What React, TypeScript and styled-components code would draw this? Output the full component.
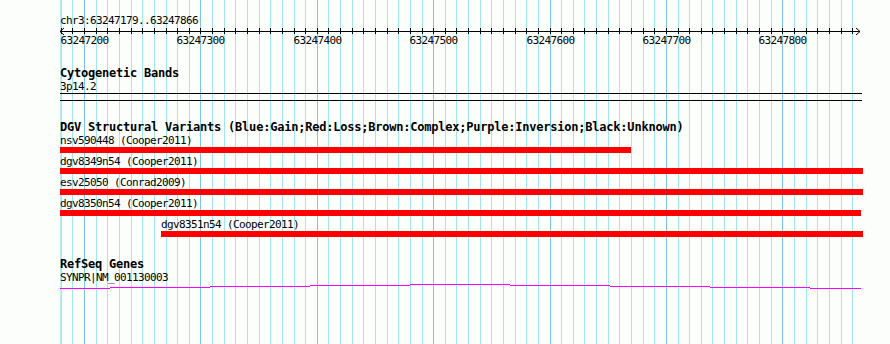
import React from "react";
import styled, { createGlobalStyle } from "styled-components";

const START = 63247179;
const END = 63247866;
const ORIGIN = 59.6;
const SCALE = 1.1638;
const toX = (bp: number) => Math.round(ORIGIN + (bp - START) * SCALE);

const ticks: number[] = [];
for (let bp = 63247180; bp <= 63247860; bp += 10) ticks.push(bp);

const variants = [
  { name: "nsv590448", study: "Cooper2011", start: START, end: 63247670 },
  { name: "dgv8349n54", study: "Cooper2011", start: START, end: 63247869 },
  { name: "esv25050", study: "Conrad2009", start: START, end: 63247869 },
  { name: "dgv8350n54", study: "Cooper2011", start: START, end: 63247868 },
  { name: "dgv8351n54", study: "Cooper2011", start: 63247266, end: 63247869 },
];

// the gene line wobbles a pixel every 100px
const geneSegments = [
  [60, 110, 5],
  [110, 210, 4],
  [210, 310, 3],
  [310, 410, 2],
  [410, 510, 1],
  [510, 610, 2],
  [610, 710, 3],
  [710, 810, 4],
  [810, 861, 5],
];

const GlobalStyle = createGlobalStyle`
  html, body {
    margin: 0;
    padding: 0;
    background: #fbfefb;
  }
  body {
    font-family: "DejaVu Sans Mono", "Liberation Mono", monospace;
    color: #000;
  }
`;

const Page = styled.div`
  position: relative;
  width: 890px;
  height: 344px;
  overflow: hidden;
  background: #fbfefb;
`;

const GridLayer = styled.svg`
  position: absolute;
  top: 0;
  left: 0;
  z-index: 0;
`;

const Tracks = styled.div`
  position: relative;
  z-index: 1;
  display: flex;
  flex-direction: column;
  padding-top: 15px;
`;

const SmallText = styled.div<{ $x?: number; $gap?: number }>`
  margin-top: ${({ $gap }) => $gap ?? 0}px;
  padding-left: ${({ $x }) => $x ?? 60}px;
  font-family: "DejaVu Sans Mono", "Liberation Mono", monospace;
  font-size: 11px;
  letter-spacing: -0.62px;
  line-height: 12px;
  height: 12px;
  white-space: nowrap;
`;

const TrackTitle = styled.div<{ $gap: number }>`
  margin-top: ${({ $gap }) => $gap}px;
  padding-left: 60px;
  font-family: "DejaVu Sans Mono", "Liberation Mono", monospace;
  font-weight: bold;
  font-size: 12px;
  letter-spacing: -0.22px;
  line-height: 12px;
  height: 12px;
  white-space: nowrap;
`;

const RulerSvg = styled.svg`
  display: block;
  overflow: visible;
`;

const BandBox = styled.div`
  box-sizing: border-box;
  margin-left: 60px;
  width: 802px;
  height: 8px;
  border-top: 1px solid #000;
  border-bottom: 1px solid #000;
`;

const VariantList = styled.div`
  display: flex;
  flex-direction: column;
  margin-top: 2px;
`;

const VariantRow = styled.div`
  display: flex;
  flex-direction: column;
  height: 21px;
`;

const Bar = styled.div<{ $x: number; $w: number }>`
  margin-left: ${({ $x }) => $x}px;
  width: ${({ $w }) => $w}px;
  height: 6px;
  background: #ff0000;
`;

const GeneSvg = styled.svg`
  display: block;
`;

const Grid: React.FC = () => (
  <GridLayer width={890} height={344} shapeRendering="crispEdges">
    <rect x={60} y={0} width={1} height={344} fill="#bdeef2" />
    {ticks.map((bp) => (
      <rect
        key={bp}
        x={toX(bp)}
        y={0}
        width={1}
        height={344}
        fill={bp % 100 === 0 ? "#7cc6ee" : "#a4e6ee"}
      />
    ))}
  </GridLayer>
);

const Ruler: React.FC = () => (
  <RulerSvg width={890} height={20}>
    <g shapeRendering="crispEdges" fill="#000">
      <rect x={60} y={4} width={800} height={1} />
      {ticks.map((bp) => (
        <rect key={bp} x={toX(bp)} y={1} width={1} height={6} />
      ))}
    </g>
    <polyline points="64,1 60,4.5 64,8" fill="none" stroke="#000" strokeWidth={1} />
    <polyline points="856,1 860,4.5 856,8" fill="none" stroke="#000" strokeWidth={1} />
    {ticks
      .filter((bp) => bp % 100 === 0)
      .map((bp) => (
        <text
          key={bp}
          x={toX(bp) + 0.5}
          y={17}
          textAnchor="middle"
          fontFamily='"DejaVu Sans Mono", monospace'
          fontSize={11}
          letterSpacing={-0.62}
        >
          {bp}
        </text>
      ))}
  </RulerSvg>
);

const App: React.FC = () => {
  return (
    <>
      <GlobalStyle />
      <Page>
        <Grid />
        <Tracks>
          <SmallText>
            chr3:{START}..{END}
          </SmallText>
          <Ruler />

          <TrackTitle $gap={20}>Cytogenetic Bands</TrackTitle>
          <SmallText $gap={2}>3p14.2</SmallText>
          <BandBox />

          <TrackTitle $gap={20}>
            DGV Structural Variants (Blue:Gain;Red:Loss;Brown:Complex;Purple:Inversion;Black:Unknown)
          </TrackTitle>
          <VariantList>
            {variants.map((v) => {
              const x = toX(v.start);
              return (
                <VariantRow key={v.name}>
                  <SmallText $x={x}>
                    {v.name} ({v.study})
                  </SmallText>
                  <Bar $x={x} $w={toX(v.end) - x} />
                </VariantRow>
              );
            })}
          </VariantList>

          <TrackTitle $gap={18}>RefSeq Genes</TrackTitle>
          <SmallText $gap={2}>SYNPR|NM_001130003</SmallText>
          <GeneSvg width={890} height={8} shapeRendering="crispEdges">
            {geneSegments.map(([a, b, y]) => (
              <rect key={a} x={a} y={y - 1} width={b - a} height={1} fill="#ff00ff" />
            ))}
          </GeneSvg>
        </Tracks>
      </Page>
    </>
  );
};

export default App;
